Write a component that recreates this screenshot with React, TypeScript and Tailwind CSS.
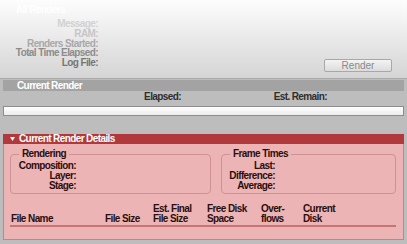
const font = { fontFamily: '"Liberation Sans", Arial, sans-serif' };

function TopLabels() {
  const rows = [
    { text: "Message:", color: "text-[#d2d2d2]" },
    { text: "RAM:", color: "text-[#c6c6c6]" },
    { text: "Renders Started:", color: "text-[#a9a9a9]" },
    { text: "Total Time Elapsed:", color: "text-[#8c8c8c]" },
    { text: "Log File:", color: "text-[#767676]" },
  ];
  return (
    <div className="w-[98px] flex flex-col items-end">
      {rows.map((r) => (
        <div key={r.text} className={`h-[9.75px] leading-[10px] font-bold ${r.color}`}>
          {r.text}
        </div>
      ))}
    </div>
  );
}

function GroupBox({ title, labels, className }: { title: string; labels: string[]; className: string }) {
  return (
    <fieldset className={`border border-[#cf9191] rounded-[4px] px-0 pt-[2px] pb-[3px] ${className}`}>
      <legend className="ml-[8px] px-[3px] font-bold leading-[10px] text-[#2b0f0f]">{title}</legend>
      <div className="flex flex-col items-end">
        {labels.map((l) => (
          <div key={l} className="h-[9.75px] leading-[10px] font-bold text-[#2b0f0f]">
            {l}
          </div>
        ))}
      </div>
    </fieldset>
  );
}

export default function App() {
  return (
    <div className="w-[407px] h-[244px] bg-[#bdbdbd] text-[10px] tracking-[-0.6px] overflow-hidden flex flex-col" style={font}>
      {/* All Renders */}
      <div className="h-[79px] bg-gradient-to-b from-[#fdfdfd] to-[#d5d5d5] border-b border-[#a9a9a9] flex flex-col">
        <div className="h-[19px] pl-[16px] pt-[5px] font-bold leading-[10px] text-white">All Renders</div>
        <div className="flex">
          <TopLabels />
          <div className="flex-1 flex justify-end pt-[40px] pr-[15px]">
            <button className="w-[68px] h-[13px] rounded-[2px] border border-[#a8a8a8] bg-gradient-to-b from-[#f4f4f4] to-[#dcdcdc] text-[#8a8a8a] text-[10px] tracking-normal leading-[11px]">
              Render
            </button>
          </div>
        </div>
      </div>

      {/* Current Render */}
      <div className="mx-[3px] mt-[1px] h-[11px] bg-[#a3a3a3] pl-[14px] font-bold text-white leading-[11px]">
        Current Render
      </div>
      <div className="flex h-[10px] items-center font-bold text-[#2e2e2e]">
        <div className="w-[181px] text-right">Elapsed:</div>
        <div className="w-[146px] text-right">Est. Remain:</div>
      </div>
      <div className="mx-[3px] mt-[5px] h-[10px] border border-[#8d8d8d] bg-gradient-to-b from-[#ffffff] to-[#ececec]" />

      {/* Current Render Details */}
      <div className="mx-[3px] mt-[18px] h-[106px] flex flex-col">
        <div className="h-[10px] bg-[#b1393b] flex items-center text-white font-bold leading-[10px]">
          <svg width="5" height="4" viewBox="0 0 5 4" className="ml-[7px] mr-[4px]">
            <path d="M0 0 L5 0 L2.5 4 Z" fill="#ffffff" />
          </svg>
          Current Render Details
        </div>
        <div className="flex-1 bg-[#ecb4b4] border border-t-0 border-[#c48484] pl-[6px] pr-[6px] pt-[5px]">
          <div className="flex gap-[10px]">
            <GroupBox title="Rendering" labels={["Composition:", "Layer:", "Stage:"]} className="w-[201px] [&>div]:w-[65px]" />
            <GroupBox title="Frame Times" labels={["Last:", "Difference:", "Average:"]} className="w-[175px] [&>div]:w-[53px]" />
          </div>
          <div className="mt-[10px] flex items-end font-bold text-[#2b0f0f] leading-[10px] border-b-2 border-[#c77474] pb-[1px] w-[386px]">
            <div className="w-[95px] pl-[1px]">File Name</div>
            <div className="w-[48px]">File Size</div>
            <div className="w-[54px]">Est. Final<br />File Size</div>
            <div className="w-[54px]">Free Disk<br />Space</div>
            <div className="w-[42px]">Over-<br />flows</div>
            <div>Current<br />Disk</div>
          </div>
        </div>
      </div>
    </div>
  );
}
